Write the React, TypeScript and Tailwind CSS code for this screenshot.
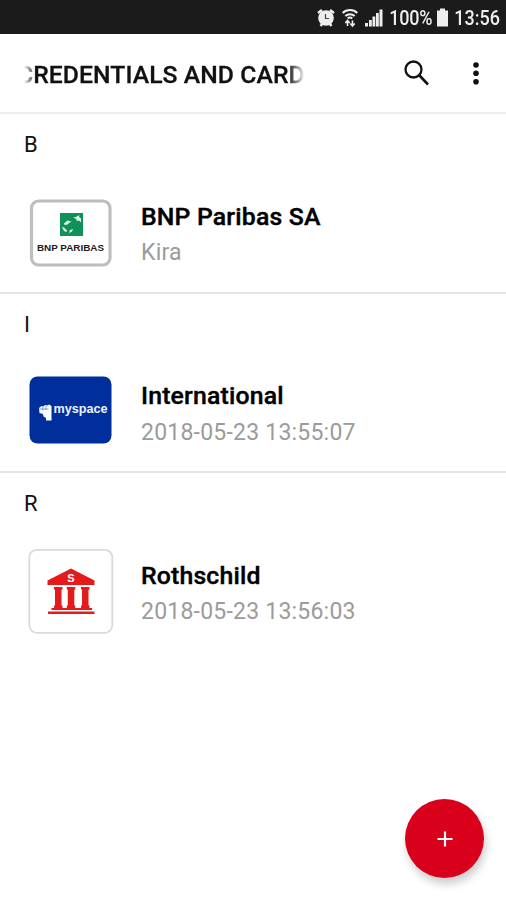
import React from 'react';

type Entry = {
  letter: string;
  name: string;
  detail: string;
  logo: JSX.Element;
};

function BnpLogo(): JSX.Element {
  return (
    <svg className="block h-[86px] w-[86px]" viewBox="0 0 86 86">
      <rect x="3.500" y="12" width="78.500" height="64" rx="7" fill="#fff" stroke="#bebebe" strokeWidth="3.200" />
      <rect x="32" y="24" width="23" height="23" fill="#0f9258" />
      <path
        d="M45 28.500l3-.5 3.500-2-.5 2 2 1.500v4l-2-2-2.500.5 0-2zM36 34.500l3.500-3 4 1-2.500 1.500-1.500 1.500-3 .5zM34 38l2 .5 3 3-.5 1.500-2.500-1zM41 44l1-3 3-1-1 2.500z"
        fill="#e6f5ec"
      />
      <text
        x="9"
        y="61.500"
        textLength="67"
        lengthAdjust="spacingAndGlyphs"
        className="font-['Liberation_Sans'] text-[9px] font-bold"
        fill="#1c1c1c"
      >
        BNP PARIBAS
      </text>
    </svg>
  );
}

function MyspaceLogo(): JSX.Element {
  return (
    <svg className="block h-[86px] w-[86px]" viewBox="0 0 86 86">
      <rect x="1.500" y="7.500" width="82" height="67" rx="8" fill="#002f9b" />
      <path
        d="M11 39l2.500-2 2 .5 1.500-1.500 2.500.5 1.500-1 2.500 1.500v14.500h-5.500v-2.500l-2.500-1.500-.5-2.500-3.500-1z"
        fill="#fff"
      />
      <path d="M11.500 40h9M14.800 37.500v4M18 37v4" stroke="#5a78c4" strokeWidth=".7" />
      <text
        x="25.500"
        y="44"
        textLength="54"
        lengthAdjust="spacingAndGlyphs"
        className="font-['Liberation_Sans'] text-[12px] font-bold"
        fill="#f0f4ff"
      >
        myspace
      </text>
    </svg>
  );
}

function BankLogo(): JSX.Element {
  return (
    <svg className="block h-[86px] w-[86px]" viewBox="0 0 86 86">
      <rect x="1.300" y="1.800" width="83" height="83" rx="7.500" fill="#fff" stroke="#dadada" strokeWidth="1.800" />
      <g fill="#e31b1d">
        <path d="M43 20.500L66.500 32.500V37h-47v-4.500z" />
        <path d="M26 39h8.500v2l-1 1v15l1 1v2H26v-2l1-1V42l-1-1zM38.800 39h8.500v2l-1 1v15l1 1v2h-8.500v-2l1-1V42l-1-1zM53 39h8.500v2l-1 1v15l1 1v2H53v-2l1-1V42l-1-1z" />
        <path d="M23.500 60h40.500v2H23.500zM20 63.500h46.500V66H20z" />
      </g>
      <text
        x="43"
        y="34"
        textAnchor="middle"
        className="font-['Liberation_Sans'] text-[11px] font-bold"
        fill="#fff"
      >
        S
      </text>
    </svg>
  );
}

const entries: Entry[] = [
  { letter: 'B', name: 'BNP Paribas SA', detail: 'Kira', logo: <BnpLogo /> },
  { letter: 'I', name: 'International', detail: '2018-05-23 13:55:07', logo: <MyspaceLogo /> },
  { letter: 'R', name: 'Rothschild', detail: '2018-05-23 13:56:03', logo: <BankLogo /> },
];

function StatusBar(): JSX.Element {
  return (
    <div className="flex h-[34px] items-center justify-end bg-[#1b1b1b] pt-[2px] pr-1.5 text-[#eee]">
      <svg className="mr-[7px] h-[20px] w-[18px]" viewBox="0 0 18 20" fill="none">
        <path d="M1 5l4-3M17 5l-4-3M3.500 18l2-2.500M14.500 18l-2-2.500" stroke="currentColor" strokeWidth="2.500" />
        <circle cx="9" cy="10" r="7.800" fill="currentColor" />
        <path d="M8.500 6V10.500h3.500" stroke="#444" strokeWidth="1.200" />
      </svg>
      <svg className="mr-[7px] h-[20px] w-[16px]" viewBox="0 0 16 20" fill="none" stroke="currentColor">
        <path
          d="M.7 5C4.500 1 11.500 1 15.300 5M3.300 8c2.700-2.500 6.700-2.500 9.400 0M5.700 10.500c1.500-1.300 3.100-1.300 4.600 0"
          strokeWidth="2"
        />
        <path d="M5.500 18v-5M3.300 15l2.200-2.500 2.200 2.500M10.500 12.500v5M8.300 15.500l2.200 2.500 2.200-2.500" strokeWidth="1.600" />
      </svg>
      <svg className="mr-[6px] h-[20px] w-[18px]" viewBox="0 0 18 20" fill="currentColor">
        <path d="M0 15h3v3.500H0zM4 12h2.800v6.500H4zM7.500 8.500h2.800v10H7.500zM11 5h2.800v13.500H11zM14.500 1.500h3v17h-3z" />
      </svg>
      <span className="scale-y-[1.12] text-[18px] leading-none font-medium tracking-[-0.2px]">100%</span>
      <svg className="mr-[6px] ml-[5px] h-[20px] w-[11px]" viewBox="0 0 11 20" fill="currentColor">
        <path d="M3 .5h5v2h3v16H0v-16h3z" />
      </svg>
      <span className="scale-y-[1.12] text-[18px] leading-none font-medium">13:56</span>
    </div>
  );
}

export default function App(): JSX.Element {
  return (
    <div className="relative h-[900px] w-[506px] overflow-hidden bg-white font-['Roboto',sans-serif] text-[#111]">
      <StatusBar />
      <header className="flex h-20 items-center border-b-2 border-[#eee] pl-6">
        <h1 className="w-[281px] overflow-hidden pt-[3px] text-[24.7px] font-medium tracking-[0.08px] whitespace-nowrap [-webkit-text-stroke:0.3px] [mask-image:linear-gradient(to_right,transparent,black_12px,black_264px,transparent)]">
          <span className="-ml-[7px]">CREDENTIALS AND CARD</span>
        </h1>
        <button type="button" aria-label="Search" className="ml-[98px] h-[28px] w-[28px]">
          <svg viewBox="0 0 28 28" fill="none" stroke="currentColor">
            <circle cx="10.500" cy="10.500" r="8" strokeWidth="2.300" />
            <path d="M16.500 16.500l8.500 9" strokeWidth="2.600" />
          </svg>
        </button>
        <button type="button" aria-label="More" className="ml-[38px] h-[28px] w-[14px]">
          <svg viewBox="0 0 14 28" fill="currentColor">
            <circle cx="7" cy="6" r="2.800" />
            <circle cx="7" cy="14.300" r="2.800" />
            <circle cx="7" cy="22.700" r="2.800" />
          </svg>
        </button>
      </header>
      <main>
        {entries.map((entry) => (
          <section
            key={entry.letter}
            className="h-[179.5px] border-b-2 border-[#e4e4e4] pt-[18px] pl-6 last:border-b-0"
          >
            <h2 className="text-[22px] leading-[26px]">{entry.letter}</h2>
            <div className="mt-[31px] ml-1 flex">
              {entry.logo}
              <div className="ml-[27px] pt-[11.5px]">
                <p className="text-[24.8px] leading-[32px] font-medium tracking-[0.18px] text-black [-webkit-text-stroke:0.4px]">
                  {entry.name}
                </p>
                <p className="mt-[5.5px] text-[23px] leading-[30px] tracking-[0.22px] text-[#9b9b9b]">{entry.detail}</p>
              </div>
            </div>
          </section>
        ))}
      </main>
      <button
        type="button"
        aria-label="Add"
        className="absolute top-[799px] left-[405px] flex h-[79px] w-[79px] items-center justify-center rounded-full bg-[#d9001b] text-white shadow-[2px_6px_9px_rgba(0,0,0,0.2)]"
      >
        <svg className="h-4 w-4" viewBox="0 0 16 16" stroke="currentColor" strokeWidth="2.200">
          <path d="M8 .5v15M.5 8h15" />
        </svg>
      </button>
    </div>
  );
}
